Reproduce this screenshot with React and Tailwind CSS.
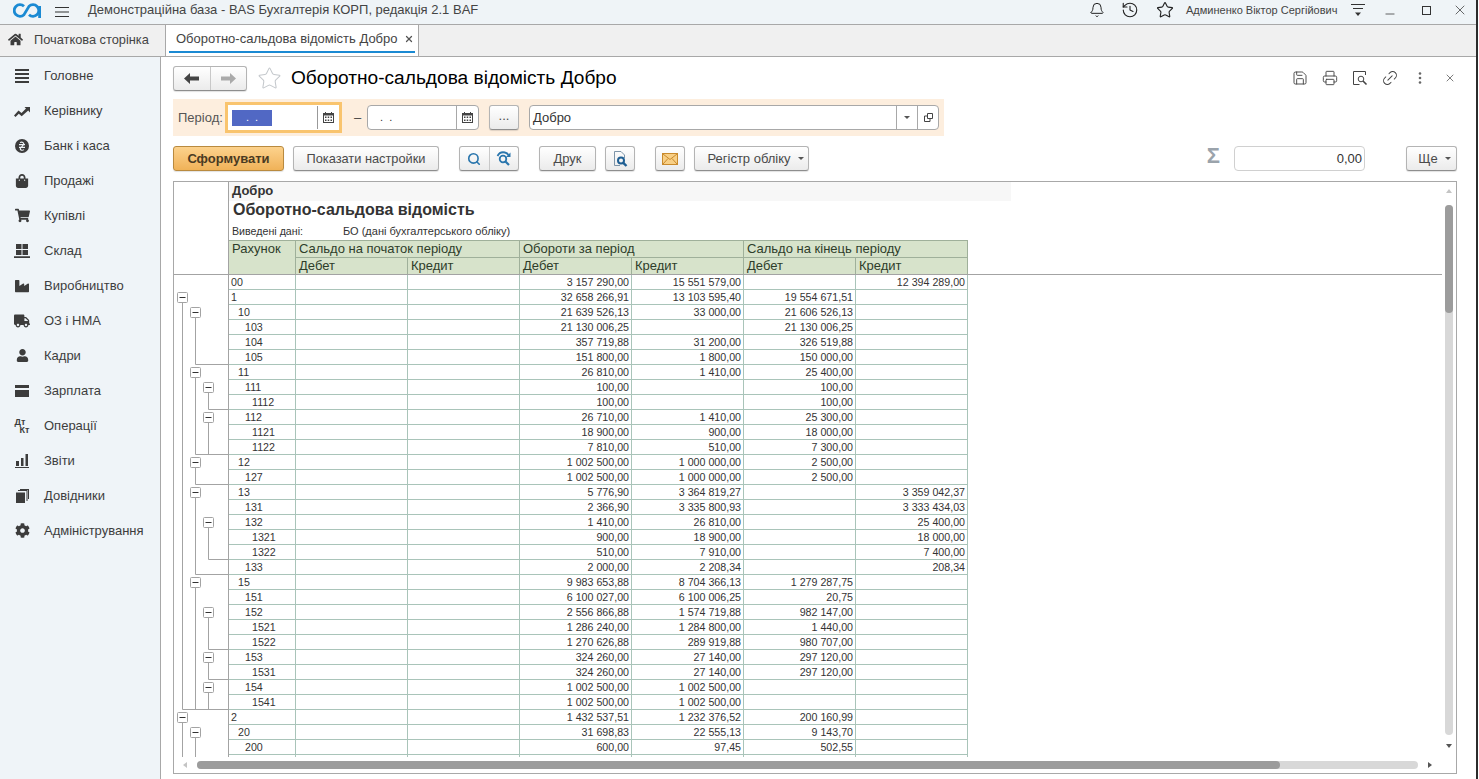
import { Bell, History, Star, Save, Printer, Link2, X, Search, Minus } from "lucide-react";
import { FaShoppingBag, FaShoppingCart, FaIndustry, FaTruck, FaUser, FaCog, FaHome } from "react-icons/fa";

/* ─── Data ─── */
const menu = [
  ["Головне", "lines"],
  ["Керівнику", "trend"],
  ["Банк і каса", "bank"],
  ["Продажі", "bag"],
  ["Купівлі", "cart"],
  ["Склад", "stock"],
  ["Виробництво", "factory"],
  ["ОЗ і НМА", "truck"],
  ["Кадри", "user"],
  ["Зарплата", "card"],
  ["Операції", "dtkt"],
  ["Звіти", "chart"],
  ["Довідники", "books"],
  ["Адміністрування", "gear"],
];

// account, indent, debit, credit, end debit, end credit
const rows = [
  ["00", 0, "3 157 290,00", "15 551 579,00", "", "12 394 289,00"],
  ["1", 0, "32 658 266,91", "13 103 595,40", "19 554 671,51", ""],
  ["10", 1, "21 639 526,13", "33 000,00", "21 606 526,13", ""],
  ["103", 2, "21 130 006,25", "", "21 130 006,25", ""],
  ["104", 2, "357 719,88", "31 200,00", "326 519,88", ""],
  ["105", 2, "151 800,00", "1 800,00", "150 000,00", ""],
  ["11", 1, "26 810,00", "1 410,00", "25 400,00", ""],
  ["111", 2, "100,00", "", "100,00", ""],
  ["1112", 3, "100,00", "", "100,00", ""],
  ["112", 2, "26 710,00", "1 410,00", "25 300,00", ""],
  ["1121", 3, "18 900,00", "900,00", "18 000,00", ""],
  ["1122", 3, "7 810,00", "510,00", "7 300,00", ""],
  ["12", 1, "1 002 500,00", "1 000 000,00", "2 500,00", ""],
  ["127", 2, "1 002 500,00", "1 000 000,00", "2 500,00", ""],
  ["13", 1, "5 776,90", "3 364 819,27", "", "3 359 042,37"],
  ["131", 2, "2 366,90", "3 335 800,93", "", "3 333 434,03"],
  ["132", 2, "1 410,00", "26 810,00", "", "25 400,00"],
  ["1321", 3, "900,00", "18 900,00", "", "18 000,00"],
  ["1322", 3, "510,00", "7 910,00", "", "7 400,00"],
  ["133", 2, "2 000,00", "2 208,34", "", "208,34"],
  ["15", 1, "9 983 653,88", "8 704 366,13", "1 279 287,75", ""],
  ["151", 2, "6 100 027,00", "6 100 006,25", "20,75", ""],
  ["152", 2, "2 556 866,88", "1 574 719,88", "982 147,00", ""],
  ["1521", 3, "1 286 240,00", "1 284 800,00", "1 440,00", ""],
  ["1522", 3, "1 270 626,88", "289 919,88", "980 707,00", ""],
  ["153", 2, "324 260,00", "27 140,00", "297 120,00", ""],
  ["1531", 3, "324 260,00", "27 140,00", "297 120,00", ""],
  ["154", 2, "1 002 500,00", "1 002 500,00", "", ""],
  ["1541", 3, "1 002 500,00", "1 002 500,00", "", ""],
  ["2", 0, "1 432 537,51", "1 232 376,52", "200 160,99", ""],
  ["20", 1, "31 698,83", "22 555,13", "9 143,70", ""],
  ["200", 2, "600,00", "97,45", "502,55", ""],
  ["", 0, "", "", "", ""],
];

// tree groups: level, first row, last row (null = runs past the visible part)
const groups = [
  [0, 1, 28], [1, 2, 5], [1, 6, 11], [1, 12, 13], [1, 14, 19], [1, 20, 28],
  [2, 7, 8], [2, 9, 11], [2, 16, 18], [2, 22, 24], [2, 25, 26], [2, 27, 28],
  [0, 29, null], [1, 30, null],
];

/* ─── Icons ─── */
function MenuIcon({ name }) {
  const c = "#3c3c3c";
  if (name === "bag") return <FaShoppingBag size={14} color={c} />;
  if (name === "cart") return <FaShoppingCart size={15} color={c} />;
  if (name === "factory") return <FaIndustry size={14} color={c} />;
  if (name === "truck") return <FaTruck size={16} color={c} />;
  if (name === "user") return <FaUser size={13} color={c} />;
  if (name === "gear") return <FaCog size={15} color={c} />;
  if (name === "dtkt")
    return (
      <span className="flex flex-col font-['Liberation_Sans',sans-serif] text-[9px] leading-[8px] font-bold text-[#3c3c3c]">
        <span>Дт</span>
        <span className="pl-[5px]">Кт</span>
      </span>
    );
  return (
    <svg width="16" height="14" viewBox="0 0 16 14" fill={c}>
      {name === "lines" && <path d="M1 0h14v2H1zM1 4h14v2H1zM1 8h14v2H1zM1 12h14v2H1z" />}
      {name === "trend" && <path d="M0 11.500l4.500-5 3 2.500L12 4.500 10.500 3H16v5.500L14.200 6.600 7.700 12.200 4.800 9.700 1.500 13z" />}
      {name === "bank" && (
        <>
          <circle cx="8" cy="7" r="7" />
          <path d="M5 5.600h6M5 8.400h6M6 3.600c2-1.200 4.500 0 3.500 2.200L6.500 9c-1 2 1.500 2.800 3.500 1.600" stroke="#eff4f8" strokeWidth="1.100" fill="none" />
        </>
      )}
      {name === "stock" && <path d="M2 0h5.500v5H2zM8.500 0H14v5H8.500zM2 6h5.500v5H2zM8.500 6H14v5H8.500zM0 12.200h16V14H0z" />}
      {name === "card" && <path d="M1 1h14v3H1zM1 6h14v7H1z" />}
      {name === "chart" && <path d="M2 7h3v5H2zM7 4h2.500v8H7zM11.500 0h2.500v12h-2.500zM1 13h14v1H1z" />}
      {name === "books" && <path d="M2 3.500h9V14H2zM4 2V1h9.500v11H12.500V2zM6 0h9v10h-1V1H6z" />}
    </svg>
  );
}

function Logo() {
  return (
    <svg width="28" height="15" viewBox="0 0 28 15" fill="none" stroke="#1b8ad3" strokeWidth="2.800">
      <path d="M11 3.300A5.800 5.800 0 1 0 11 11.700L16 3.300A5.800 5.800 0 1 1 16 11.700" />
      <path d="M26.600 3V15" />
    </svg>
  );
}

function Lines3({ className }) {
  return (
    <svg width="16" height="12" viewBox="0 0 16 12" className={className}>
      <path d="M1 1.500h14M1 6h14M1 10.500h14" stroke="#333" strokeWidth="1.200" />
    </svg>
  );
}

function CalendarIcon() {
  return (
    <svg width="11" height="11" viewBox="0 0 11 11">
      <path d="M2 0h1v1h5V0h1v1h2v10H0V1h2z" fill="#444" />
      <path d="M1 3.500h9V10H1z" fill="#fff" />
      <path d="M2 4.500h1.500V6H2zM4.700 4.500h1.500V6H4.700zM7.500 4.500H9V6H7.500zM2 7.500h1.500V9H2zM4.700 7.500h1.500V9H4.700zM7.500 7.500H9V9H7.500z" fill="#444" />
    </svg>
  );
}

function NavArrow({ color, flip }) {
  return (
    <svg width="15" height="11" viewBox="0 0 15 11" className={flip ? "-scale-x-100" : ""}>
      <path d="M0 5.500L6 0v3.500h9v4H6V11z" fill={color} />
    </svg>
  );
}

function RefreshSearch() {
  return (
    <svg width="16" height="15" viewBox="0 0 16 15" fill="none" stroke="#2a76ad" strokeWidth="1.800">
      <circle cx="7" cy="8" r="3.300" />
      <path d="M9.500 10.500L13 14" strokeWidth="2.200" />
      <path d="M1.500 5C3 2 6 .8 9 1.500c1.500.3 2.700 1.200 3.500 2.500" />
      <path d="M14.500 1.500V6H10z" fill="#2a76ad" stroke="none" />
    </svg>
  );
}

function PagePreview() {
  return (
    <svg width="15" height="16" viewBox="0 0 15 16" fill="none">
      <path d="M1.500.5H8l3.500 3.500v3M1.500.5V14.500H7" stroke="#7d94a8" />
      <circle cx="8" cy="9.500" r="3" stroke="#1f5f93" strokeWidth="2" />
      <path d="M10.300 11.800L13.500 15" stroke="#1f5f93" strokeWidth="2.400" />
    </svg>
  );
}

function Envelope() {
  return (
    <svg width="16" height="12" viewBox="0 0 16 12">
      <rect x=".5" y=".5" width="15" height="11" fill="#f8cf85" stroke="#c98a2c" />
      <path d="M1 1l7 5.500L15 1M1 11l5-5.500M15 11l-5-5.500" fill="none" stroke="#c98a2c" />
    </svg>
  );
}

function BoxPreview() {
  return (
    <svg width="16" height="16" viewBox="0 0 16 16" fill="none" stroke="#444">
      <path d="M13.500 5V1.500h-12v13h6" />
      <circle cx="9" cy="9" r="2.800" />
      <path d="M11 11l3.500 3.500" strokeWidth="1.600" />
    </svg>
  );
}

function TreeGutter() {
  const mid = (i) => 15 * i + 7;
  const bottom = (i) => 14 + 15 * i + 0.5;
  const xs = [8.5, 21.5, 34.5];
  return (
    <svg width="54" height="482" className="shrink-0">
      {groups.map(([lvl, from, to]) => (
        <path
          key={`${lvl}-${from}`}
          d={to === null ? `M${xs[lvl]} ${mid(from)}V482` : `M${xs[lvl]} ${mid(from)}V${bottom(to)}H54`}
          stroke="#a3a3a3"
          fill="none"
        />
      ))}
      {groups.map(([lvl, from]) => (
        <g key={`b-${lvl}-${from}`}>
          <rect x={xs[lvl] - 5} y={mid(from) - 4.5} width="10" height="10" rx="1" fill="#fff" stroke="#a3a3a3" />
          <path d={`M${xs[lvl] - 3} ${mid(from) + 0.5}h6`} stroke="#333" />
        </g>
      ))}
    </svg>
  );
}

/* ─── Small pieces ─── */
const btn = "flex items-center justify-center h-[25px] rounded-[3px] border border-[#b4b4b4] border-b-[#8e8e8e] bg-gradient-to-b from-white to-[#ebebeb] text-[#4a4a4a] shadow-[0_1px_1px_rgba(0,0,0,0.12)]";
const tableCols = "grid grid-cols-[67px_112px_112px_112px_112px_112px_112px] w-[739px]";

function Caret() {
  return <span className="inline-block ml-[7px] border-x-[3px] border-t-[3px] border-x-transparent border-t-[#555]" />;
}

function ReportRow({ row }) {
  const [code, indent, debit, credit, endDebit, endCredit] = row;
  const pad = ["pl-[2px]", "pl-[9px]", "pl-[16px]", "pl-[23px]"][indent];
  const cell = "border-r border-[#a9c4b9] text-right pr-[2px] overflow-hidden";
  return (
    <div className={`${tableCols} h-[15px] border-b border-[#a9c4b9] leading-[14px]`}>
      <div className={`border-r border-[#a9c4b9] ${pad}`}>{code}</div>
      <div className={cell} />
      <div className={cell} />
      <div className={cell}>{debit}</div>
      <div className={cell}>{credit}</div>
      <div className={cell}>{endDebit}</div>
      <div className={cell}>{endCredit}</div>
    </div>
  );
}

function App() {
  return (
    <div className="flex h-screen w-full overflow-hidden bg-white font-['Liberation_Sans',Arial,sans-serif] text-[#333]">
      <div className="flex flex-col w-[1476px] shrink-0">
        {/* Title bar */}
        <header className="flex items-center h-[25px] shrink-0 border-b border-[#a8a8a8] bg-[#eff4f7] text-[13px] text-[#444]">
          <div className="ml-[13px] mb-[3px]"><Logo /></div>
          <Lines3 className="ml-[13px] mb-[1px]" />
          <span className="ml-[18px] mb-[4px]">Демонстраційна база - BAS Бухгалтерія КОРП, редакція 2.1 BAF</span>
          <div className="ml-auto flex items-center mb-[4px]">
            <Bell size={16} strokeWidth={1.500} color="#222" />
            <History size={18} strokeWidth={1.500} color="#222" className="ml-[16px]" />
            <Star size={18} strokeWidth={1.500} color="#222" className="ml-[17px]" />
            <span className="ml-[12px] w-[151px] text-[11px] whitespace-nowrap">Админенко Віктор Сергійович</span>
            <svg width="16" height="14" viewBox="0 0 16 14" className="ml-[13px]">
              <path d="M1 1.500h14M3 5.500h10" stroke="#333" strokeWidth="1.200" />
              <path d="M5 9.500h6L8 13z" fill="#333" />
            </svg>
            <Minus size={14} strokeWidth={1.300} color="#333" className="ml-[17px] mt-[8px]" />
            <span className="ml-[25px] w-[9px] h-[9px] border border-[#333]" />
            <X size={16} strokeWidth={1.100} color="#333" className="ml-[21px] mr-[8px]" />
          </div>
        </header>

        {/* Tabs */}
        <nav className="flex h-[32px] shrink-0 border-b border-[#a8a8a8] bg-[#f0f0f0] text-[13px] text-[#444]">
          <div className="flex items-center w-[166px] border-r border-[#a8a8a8] pb-[2px]">
            <FaHome size={15} color="#3c3c3c" className="ml-[8px]" />
            <span className="ml-[11px] text-[12.800px]">Початкова сторінка</span>
          </div>
          <div className="flex flex-col w-[253px] border-r border-[#a8a8a8] bg-white">
            <div className="flex items-center flex-1 pl-[10px] pt-[1px]">
              <span>Оборотно-сальдова відомість Добро</span>
              <X size={10} strokeWidth={3} color="#555" className="ml-[6px]" />
            </div>
            <div className="h-[2px] mx-[3px] mb-[3px] bg-[#1b8ad3]" />
          </div>
        </nav>

        <div className="flex flex-1 min-h-0">
          {/* Sidebar */}
          <aside className="w-[161px] shrink-0 border-r border-[#a8a8a8] bg-[#eff4f8] pt-[1px] text-[13px] text-[#3d3d3d]">
            {menu.map(([label, icon]) => (
              <div key={label} className="flex items-center h-[35px]">
                <span className="flex items-center justify-center w-[16px] ml-[14px]"><MenuIcon name={icon} /></span>
                <span className="ml-[14px]">{label}</span>
              </div>
            ))}
          </aside>

          {/* Form */}
          <main className="flex-1 min-w-0 pl-[12px] pr-[19px] pt-[8px] pb-[5px] flex flex-col text-[12px]">
            <div className="flex items-center h-[26px] shrink-0">
              <div className={`${btn} w-[74px]`}>
                <span className="flex-1 flex justify-center border-r border-[#c8c8c8] h-full items-center"><NavArrow color="#444" /></span>
                <span className="flex-1 flex justify-center"><NavArrow color="#aaa" flip /></span>
              </div>
              <Star size={25} strokeWidth={1} color="#c4c8cc" className="ml-[10px]" />
              <h1 className="ml-[9px] text-[19.120px] text-black">Оборотно-сальдова відомість Добро</h1>
              <div className="ml-auto flex items-center gap-[14px]">
                <Save size={16} strokeWidth={1.400} color="#444" />
                <Printer size={16} strokeWidth={1.400} color="#444" />
                <BoxPreview />
                <Link2 size={18} strokeWidth={1.300} color="#444" className="-rotate-45 -mx-px" />
                <svg width="16" height="16" viewBox="0 0 16 16" fill="#666"><circle cx="8" cy="3.500" r="1.300" /><circle cx="8" cy="8" r="1.300" /><circle cx="8" cy="12.500" r="1.300" /></svg>
                <X size={12} strokeWidth={1.400} color="#444" className="ml-[2px] mr-[1px]" />
              </div>
            </div>

            {/* Filter */}
            <div className="flex items-center w-[771px] h-[37px] mt-[8px] shrink-0 bg-[#fdeede] text-[13px]">
              <span className="w-[52px] pl-[5px] text-[#555]">Період:</span>
              <div className="flex w-[117px] h-[31px] border-[3px] border-[#f9c46e] bg-white p-[1px]">
                <div className="flex-1 flex items-center border-r border-[#999] pl-[3px]">
                  <span className="w-[40px] h-[16px] bg-[#5168c4] text-white text-center text-[11px] leading-[14px]">. &nbsp;.</span>
                </div>
                <span className="flex items-center justify-center w-[20px]"><CalendarIcon /></span>
              </div>
              <span className="ml-[12px] w-[7px] text-[#444]">–</span>
              <div className="flex ml-[6px] w-[112px] h-[25px] rounded-[4px] border border-[#a8a8a8] bg-white">
                <span className="flex-1 border-r border-[#a8a8a8] pl-[12px] text-[11px] leading-[22px]">. &nbsp;.</span>
                <span className="flex items-center justify-center w-[21px]"><CalendarIcon /></span>
              </div>
              <div className={`${btn} ml-[10px] w-[30px] pb-[3px]`}>...</div>
              <div className="flex items-center ml-[10px] w-[410px] h-[25px] rounded-[4px] border border-[#a8a8a8] bg-white">
                <span className="flex-1 pl-[3px]">Добро</span>
                <span className="flex items-center justify-center w-[21px] h-full border-l border-[#a8a8a8]"><span className="border-x-[3px] border-t-[3px] border-x-transparent border-t-[#555]" /></span>
                <span className="flex items-center justify-center w-[21px] h-full border-l border-[#a8a8a8]">
                  <svg width="9" height="9" viewBox="0 0 9 9" fill="none" stroke="#444"><path d="M3.500.5h5v5h-5zM3.500 3H.5v5.500H6V6" /></svg>
                </span>
              </div>
            </div>

            {/* Commands */}
            <div className="flex items-center h-[25px] mt-[10px] shrink-0 text-[13px]">
              <div className="flex items-center justify-center w-[111px] h-[25px] rounded-[3px] border border-[#b98a3f] bg-gradient-to-b from-[#fcd28c] to-[#f0b258] font-bold text-[#4a3a22] shadow-[0_1px_1px_rgba(0,0,0,0.12)]">Сформувати</div>
              <div className={`${btn} ml-[9px] w-[146px] text-[12.800px]`}>Показати настройки</div>
              <div className={`${btn} ml-[20px] w-[60px]`}>
                <span className="flex-1 flex justify-center items-center h-full border-r border-[#c8c8c8]"><Search size={14} strokeWidth={2.800} color="#2a76ad" /></span>
                <span className="flex-1 flex justify-center"><RefreshSearch /></span>
              </div>
              <div className={`${btn} ml-[20px] w-[57px]`}>Друк</div>
              <div className={`${btn} ml-[9px] w-[30px]`}><PagePreview /></div>
              <div className={`${btn} ml-[20px] w-[30px]`}><Envelope /></div>
              <div className={`${btn} ml-[9px] w-[115px] pl-[8px]`}>Регістр обліку<Caret /></div>
              <span className="ml-auto text-[22px] leading-none font-bold text-[#9aa3ab] mb-[6px]">Σ</span>
              <div className="ml-[14px] w-[131px] h-[25px] rounded-[4px] border border-[#d0d0d0] bg-white text-right pr-[2px] leading-[23px]">0,00</div>
              <div className={`${btn} ml-[41px] w-[51px] pl-[6px]`}>Ще<Caret /></div>
            </div>

            {/* Report */}
            <section className="flex flex-col flex-1 min-h-0 mt-[10px] border border-[#a8a8a8] text-[10.670px] text-[#333]">
              <div className="flex flex-1 min-h-0">
                <div className="flex-1 min-w-0 overflow-hidden">
                  {/* Report head */}
                  <div className="flex h-[92px] pl-[54px]">
                    <div className="flex-1 border-l border-[#a3a3a3]">
                      <div className="w-[782px] h-[19px] bg-[#f7f7f7] pl-[3px] text-[13px] font-bold leading-[17px]">Добро</div>
                      <div className="h-[20px] pl-[4px] text-[16px] font-bold leading-[18px]">Оборотно-сальдова відомість</div>
                      <div className="flex h-[19px] pl-[3px] pt-[2px]">
                        <span className="w-[111px]">Виведені дані:</span>
                        <span className="text-[11px]">БО (дані бухгалтерського обліку)</span>
                      </div>
                      <div className={`${tableCols} grid-rows-[17px_16px] h-[34px] border-t border-[#9fb09a] text-[13px] leading-[16px] text-[#2e3d2a]`}>
                        <div className="row-span-2 bg-[#d7e3cb] border-r border-[#9fb09a] pl-[3px]">Рахунок</div>
                        <div className="col-span-2 bg-[#d7e3cb] border-r border-b border-[#9fb09a] pl-[3px]">Сальдо на початок періоду</div>
                        <div className="col-span-2 bg-[#d7e3cb] border-r border-b border-[#9fb09a] pl-[3px]">Обороти за період</div>
                        <div className="col-span-2 bg-[#d7e3cb] border-r border-b border-[#9fb09a] pl-[3px]">Сальдо на кінець періоду</div>
                        {["Дебет", "Кредит", "Дебет", "Кредит", "Дебет", "Кредит"].map((t, i) => (
                          <div key={i} className="bg-[#d7e3cb] border-r border-[#9fb09a] pl-[3px]">{t}</div>
                        ))}
                      </div>
                    </div>
                  </div>
                  <div className="h-px w-[1269px] bg-[#a3a3a3]" />
                  {/* Report body */}
                  <div className="flex h-[482px] overflow-hidden">
                    <TreeGutter />
                    <div className="flex-1 border-l border-[#a3a3a3]">
                      {rows.map((r, i) => <ReportRow key={i} row={r} />)}
                    </div>
                  </div>
                </div>
                {/* Vertical scrollbar */}
                <div className="flex flex-col items-center w-[14px] shrink-0">
                  <span className="mt-[7px] border-x-[3px] border-b-[4px] border-x-transparent border-b-[#c4c4c4]" />
                  <div className="mt-[12px] w-[8px] h-[530px] rounded-[4px] bg-[#d8d8d8]">
                    <div className="w-[8px] h-[108px] rounded-[4px] bg-[#9c9c9c]" />
                  </div>
                  <span className="mt-[9px] border-x-[3px] border-t-[4px] border-x-transparent border-t-[#555]" />
                </div>
              </div>
              {/* Horizontal scrollbar */}
              <div className="flex items-center h-[15px] shrink-0 pl-[9px] pb-[1px]">
                <span className="border-y-[3px] border-r-[4px] border-y-transparent border-r-[#c4c4c4]" />
                <div className="ml-[10px] w-[1221px] h-[8px] rounded-[4px] bg-[#d8d8d8]">
                  <div className="w-[1083px] h-[8px] rounded-[4px] bg-[#9c9c9c]" />
                </div>
                <span className="ml-[10px] border-y-[3px] border-l-[4px] border-y-transparent border-l-[#555]" />
              </div>
            </section>
          </main>
        </div>
      </div>
      <div className="w-[2px] shrink-0 bg-[#2b2b2b]" />
    </div>
  );
}

export default App;
